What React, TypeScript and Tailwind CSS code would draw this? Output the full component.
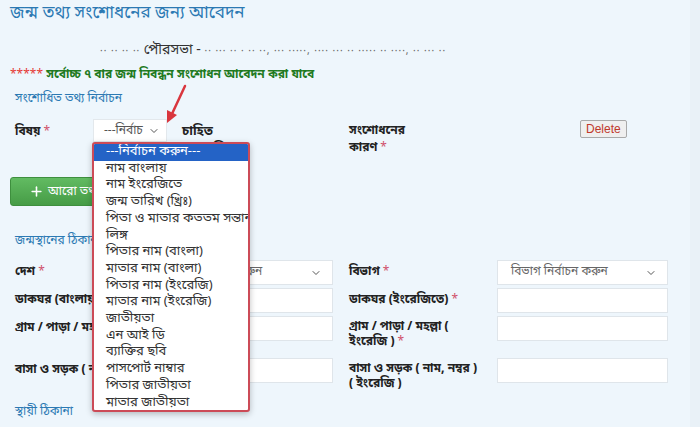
import { ChevronDown, Plus } from 'lucide-react'

const options = [
  'নাম বাংলায়',
  'নাম ইংরেজিতে',
  'জন্ম তারিখ (খ্রিঃ)',
  'পিতা ও মাতার কততম সন্তান',
  'লিঙ্গ',
  'পিতার নাম (বাংলা)',
  'মাতার নাম (বাংলা)',
  'পিতার নাম (ইংরেজি)',
  'মাতার নাম (ইংরেজি)',
  'জাতীয়তা',
  'এন আই ডি',
  'ব্যাক্তির ছবি',
  'পাসপোর্ট নাম্বার',
  'পিতার জাতীয়তা',
  'মাতার জাতীয়তা',
]

function Req() {
  return <span className="text-[#d0506a] font-normal"> *</span>
}

function Field({ select, placeholder }: { select?: boolean; placeholder?: string }) {
  return (
    <div className="h-[25px] bg-white border border-[#dfe5ea] flex items-center justify-between pl-[13px] pr-[10px] text-[12px] font-normal text-[#666]">
      <span>{placeholder}</span>
      {select && <ChevronDown className="w-3 h-3 text-[#555]" strokeWidth={2} />}
    </div>
  )
}

export default function App() {
  return (
    <div
      className="relative w-[700px] h-[427px] overflow-hidden bg-[#eef6fc] text-[#222]"
      style={{ fontFamily: '"Noto Sans Bengali", "Noto Sans", "Liberation Sans", sans-serif' }}
    >
      <div className="absolute right-0 top-0 w-[10px] h-full bg-[#e9f1f7]" />

      <h1 className="pl-[10px] pt-[2px] text-[17px] leading-[24px] text-[#2b79b3]">
        জন্ম তথ্য সংশোধনের জন্য আবেদন
      </h1>

      <p className="mt-[16px] pl-[100px] text-[14px] leading-[18px] text-[#333] whitespace-nowrap">
        <span className="text-[#666] text-[10px] tracking-[1px]">·· ·· ·· ·· </span>
        পৌরসভা -{' '}
        <span className="text-[#666] text-[10px] tracking-[1px]">·· ··· ·· · ·· ··, ··· ·····, ···· ··· ·· ····· ·· ····, ·· ··· ··</span>
      </p>

      <p className="mt-[6px] pl-[10px] text-[12px] leading-[16px] font-bold text-[#1f7a1f] whitespace-nowrap">
        <span className="text-[#e53935] font-normal">*****</span> সর্বোচ্চ ৭ বার জন্ম নিবন্ধন সংশোধন আবেদন করা যাবে
      </p>

      <p className="mt-[8px] pl-[15px] text-[12px] leading-[16px] text-[#2b79b3]">সংশোধিত তথ্য নির্বাচন</p>

      {/* subject row */}
      <div className="mt-[12px] flex items-start text-[12px] font-bold">
        <div className="w-[93px] pl-[15px] pt-[4px]">
          বিষয়<Req />
        </div>
        <div className="w-[74px] h-[23px] bg-white border border-[#e3e8ec] flex items-center justify-between pl-[10px] pr-[6px] font-normal text-[12px] text-[#555]">
          <span>---নির্বাচ</span>
          <ChevronDown className="w-3 h-3" strokeWidth={2} />
        </div>
        <div className="ml-[15px] w-[150px] pt-[4px] leading-[17px] text-[13px]">
          চাহিত
          <br />
          সংশোধিত
        </div>
        <div className="ml-[17px] w-[160px] pt-[4px] leading-[17px]">
          সংশোধনের
          <br />
          কারণ<Req />
        </div>
        <button
          className="ml-[71px] mt-[1px] h-[18px] px-[5px] bg-[#efefef] border border-[#a9a9a9] rounded-[2px] text-[12px] font-normal text-[#c0392b] leading-none"
          style={{ fontFamily: '"Liberation Sans", Arial, sans-serif' }}
        >
          Delete
        </button>
      </div>

      <div className="mt-[20px] pl-[10px]">
        <button className="h-[29px] w-[200px] flex items-center gap-[4px] pl-[18px] rounded-[3px] border border-[#3e8f3e] bg-gradient-to-b from-[#62bb62] to-[#469c46] text-white text-[12px]">
          <Plus className="w-[15px] h-[15px]" strokeWidth={2.5} />
          আরো তথ্য যোগ করুন
        </button>
      </div>

      <p className="mt-[27px] pl-[15px] text-[12px] leading-[16px] text-[#2b79b3]">জন্মস্থানের ঠিকানা</p>

      {/* address grid */}
      <div className="mt-[11px] pl-[15px] grid grid-cols-[147px_171px_16px_148px_171px] gap-y-[3px] text-[12px] font-bold leading-[15px]">
        <div className="pt-[5px]">দেশ<Req /></div>
        <Field select placeholder="দেশ নির্বাচন করুন" />
        <div />
        <div className="pt-[5px]">বিভাগ<Req /></div>
        <Field select placeholder="বিভাগ নির্বাচন করুন" />

        <div className="pt-[5px]">ডাকঘর (বাংলায়)<Req /></div>
        <Field />
        <div />
        <div className="pt-[5px]">ডাকঘর (ইংরেজিতে)<Req /></div>
        <Field />

        <div className="pt-[5px] h-[39px]">গ্রাম / পাড়া / মহল্লা<Req /></div>
        <Field />
        <div />
        <div className="pt-[4px] h-[39px]">
          গ্রাম / পাড়া / মহল্লা (
          <br />
          ইংরেজি )<Req />
        </div>
        <Field />

        <div className="pt-[5px]">বাসা ও সড়ক ( নাম, নম্বর )</div>
        <Field />
        <div />
        <div className="pt-[4px]">
          বাসা ও সড়ক ( নাম, নম্বর )
          <br />( ইংরেজি )
        </div>
        <Field />
      </div>

      <p className="mt-[12px] pl-[15px] text-[12px] leading-[16px] text-[#2b79b3]">স্থায়ী ঠিকানা</p>

      {/* open dropdown list */}
      <div className="absolute left-[92px] top-[142px] w-[158px] h-[270px] bg-white border-2 border-[#cc4b57] rounded-[3px] shadow-[0_2px_6px_rgba(0,0,0,0.25)] overflow-hidden text-[13px] leading-[16.7px] text-[#333]">
        <div className="bg-[#2463c6] text-white pl-[12px]">---নির্বাচন করুন---</div>
        {options.map((o) => (
          <div key={o} className="pl-[12px] whitespace-nowrap">
            {o}
          </div>
        ))}
      </div>

      {/* annotation arrow */}
      <svg className="absolute left-[160px] top-[82px]" width="32" height="46" viewBox="0 0 32 46">
        <line x1="25" y1="4" x2="11" y2="34" stroke="#d9363e" strokeWidth="2.5" strokeLinecap="round" />
        <path d="M7 41 L7 28 L17 33 Z" fill="#d9363e" />
      </svg>
    </div>
  )
}
